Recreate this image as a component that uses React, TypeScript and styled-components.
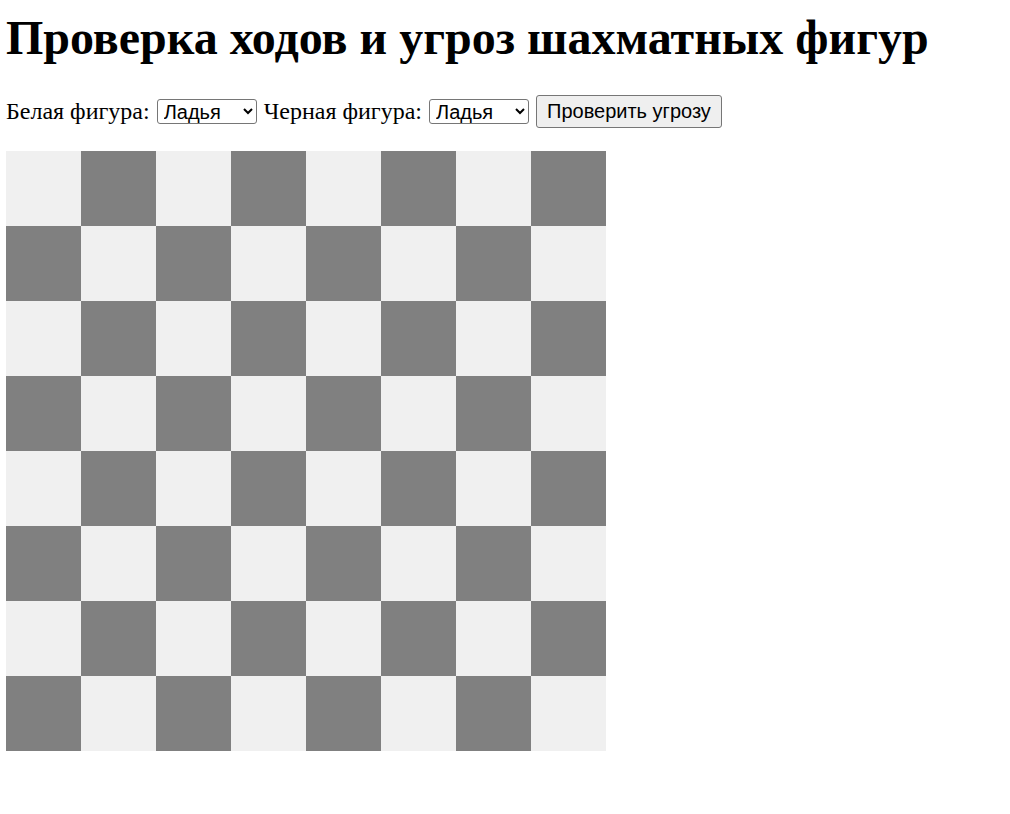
import React from "react";
import styled, { createGlobalStyle } from "styled-components";

const Global = createGlobalStyle`
  body {
    margin: 6px;
    font-family: "Liberation Serif", "Times New Roman", serif;
    font-size: 24px;
    color: #000;
    background: #fff;
  }
`;

const Title = styled.h1`
  font-size: 48px;
  font-weight: bold;
  margin: 4px 0 30px;
  line-height: 1.15;
`;

const Controls = styled.div`
  display: flex;
  align-items: center;
  gap: 7px;
  margin-bottom: 23px;
`;

const Label = styled.label`
  display: inline-flex;
  align-items: center;
  gap: 7px;
`;

const Select = styled.select`
  font-family: "Liberation Sans", Arial, sans-serif;
  font-size: 20px;
  width: 100px;
  height: 25px;
  padding: 0 2px;
  border: 1px solid #767676;
  border-radius: 3px;
  background: #fff;
  color: #000;
`;

const Button = styled.button`
  font-family: "Liberation Sans", Arial, sans-serif;
  font-size: 20px;
  height: 33px;
  padding: 0 10px;
  border: 1px solid #767676;
  border-radius: 3px;
  background: #efefef;
  color: #000;
`;

const Board = styled.div`
  display: grid;
  grid-template-columns: repeat(8, 75px);
  grid-template-rows: repeat(8, 75px);
  width: 600px;
`;

const Square = styled.div<{ $dark: boolean }>`
  background: ${(p) => (p.$dark ? "#808080" : "#f0f0f0")};
`;

const pieces = ["Ладья", "Слон", "Ферзь", "Конь", "Король"];

export default function App() {
  const squares = [];
  for (let r = 0; r < 8; r++) {
    for (let c = 0; c < 8; c++) {
      squares.push(<Square key={`${r}-${c}`} $dark={(r + c) % 2 === 1} />);
    }
  }
  return (
    <>
      <Global />
      <Title>Проверка ходов и угроз шахматных фигур</Title>
      <Controls>
        <Label>
          Белая фигура:
          <Select defaultValue="Ладья">
            {pieces.map((p) => (
              <option key={p}>{p}</option>
            ))}
          </Select>
        </Label>
        <Label>
          Черная фигура:
          <Select defaultValue="Ладья">
            {pieces.map((p) => (
              <option key={p}>{p}</option>
            ))}
          </Select>
        </Label>
        <Button>Проверить угрозу</Button>
      </Controls>
      <Board>{squares}</Board>
    </>
  );
}
